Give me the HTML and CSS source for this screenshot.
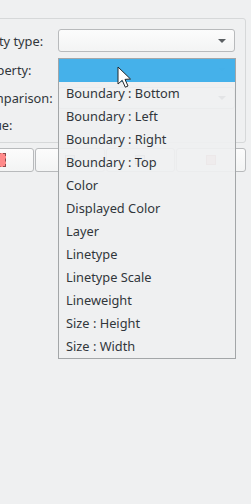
FILE: index.html
```html
<!DOCTYPE html>
<html lang="en">

<head>
    <meta charset="UTF-8">
    <title>Select similar</title>
    <link rel="stylesheet" href="styles.css">
</head>

<body>
    <div class="page">
        <!-- filter group -->
        <div class="group">
            <div class="form">
                <div class="label">Entity type:</div>
                <div class="combo"><span class="arrow"></span></div>
                <div class="label">Property:</div>
                <div class="combo"><span class="arrow"></span></div>
                <div class="label">Comparison:</div>
                <div class="combo"><span class="arrow"></span></div>
                <div class="label">Value:</div>
                <div class="field"></div>
            </div>
        </div>
        <!-- buttons -->
        <div class="buttons">
            <div class="btn"><span class="swatch"></span></div>
            <div class="btn"><span class="icon"></span></div>
            <div class="btn"><span class="icon"></span></div>
            <div class="btn"><span class="icon red"></span></div>
        </div>
    </div>

    <!-- open property list -->
    <ul class="popup">
        <li class="current"></li>
        <li>Boundary : Bottom</li>
        <li>Boundary : Left</li>
        <li>Boundary : Right</li>
        <li>Boundary : Top</li>
        <li>Color</li>
        <li>Displayed Color</li>
        <li>Layer</li>
        <li>Linetype</li>
        <li>Linetype Scale</li>
        <li>Lineweight</li>
        <li>Size : Height</li>
        <li>Size : Width</li>
    </ul>

    <!-- mouse pointer -->
    <svg class="cursor" width="15" height="23" viewBox="0 0 15 23">
        <path d="M1 1 L1 18 L5.2 14.3 L8.3 21.2 L11 20 L8 13.4 L13.5 13 Z" fill="#fff" stroke="#232629" stroke-width="1" stroke-linejoin="round"/>
    </svg>
</body>

</html>
```

FILE: styles.css
```css
* {
    margin: 0;
    padding: 0;
    list-style: none;
    box-sizing: border-box;
}

body {
    width: 251px;
    height: 504px;
    overflow: hidden;
    background: #eff0f1;
    font-family: "Noto Sans", "Open Sans", sans-serif;
    font-size: 12.8px;
    color: #31363b;
    position: relative;
}

.page {
    margin-left: -40px;
    width: 286px;
    padding-top: 18px;
}

.group {
    border: 1px solid #d6d8d9;
    border-radius: 3px;
    padding: 10px 10px 7px 15px;
}

.form {
    display: grid;
    grid-template-columns: 82px 1fr;
    grid-template-rows: 23px 23px 22px 20px;
    row-gap: 6px;
    align-items: center;
}

.label {
    white-space: nowrap;
}

.combo {
    height: 100%;
    border: 1px solid #b8babc;
    border-radius: 3px;
    background: linear-gradient(#fcfcfc, #f3f4f4);
    display: flex;
    justify-content: flex-end;
    align-items: center;
    padding-right: 8px;
}

.arrow {
    width: 0;
    height: 0;
    border-left: 4px solid transparent;
    border-right: 4px solid transparent;
    border-top: 4px solid #5b5f62;
}

.field {
    height: 100%;
}

.buttons {
    display: flex;
    gap: 1px;
    margin: 5px 0 0 4px;
    height: 24px;
}

.btn {
    flex: 1;
    border: 1px solid #b8babc;
    border-radius: 3px;
    background: linear-gradient(#fcfcfc, #f3f4f4);
    display: flex;
    justify-content: center;
    align-items: center;
}

.swatch {
    width: 14px;
    height: 14px;
    background: #ff8a8a;
    border: 1px dashed #8a4a4a;
}

.icon {
    width: 10px;
    height: 10px;
    border: 1px solid #9a9ea1;
    background: #e4e5e6;
}

.icon.red {
    background: #f3c3c3;
    border-color: #c98c8c;
}

.popup {
    position: absolute;
    left: 58px;
    top: 58px;
    width: 178px;
    height: 301px;
    border: 1px solid #a3a6a8;
    background: rgba(239, 240, 241, 0.92);
}

.popup li {
    height: 23px;
    line-height: 23px;
    padding-left: 7px;
    white-space: nowrap;
}

.popup .current {
    background: rgba(61, 174, 233, 0.96);
}

.cursor {
    position: absolute;
    left: 117px;
    top: 66px;
}
```
